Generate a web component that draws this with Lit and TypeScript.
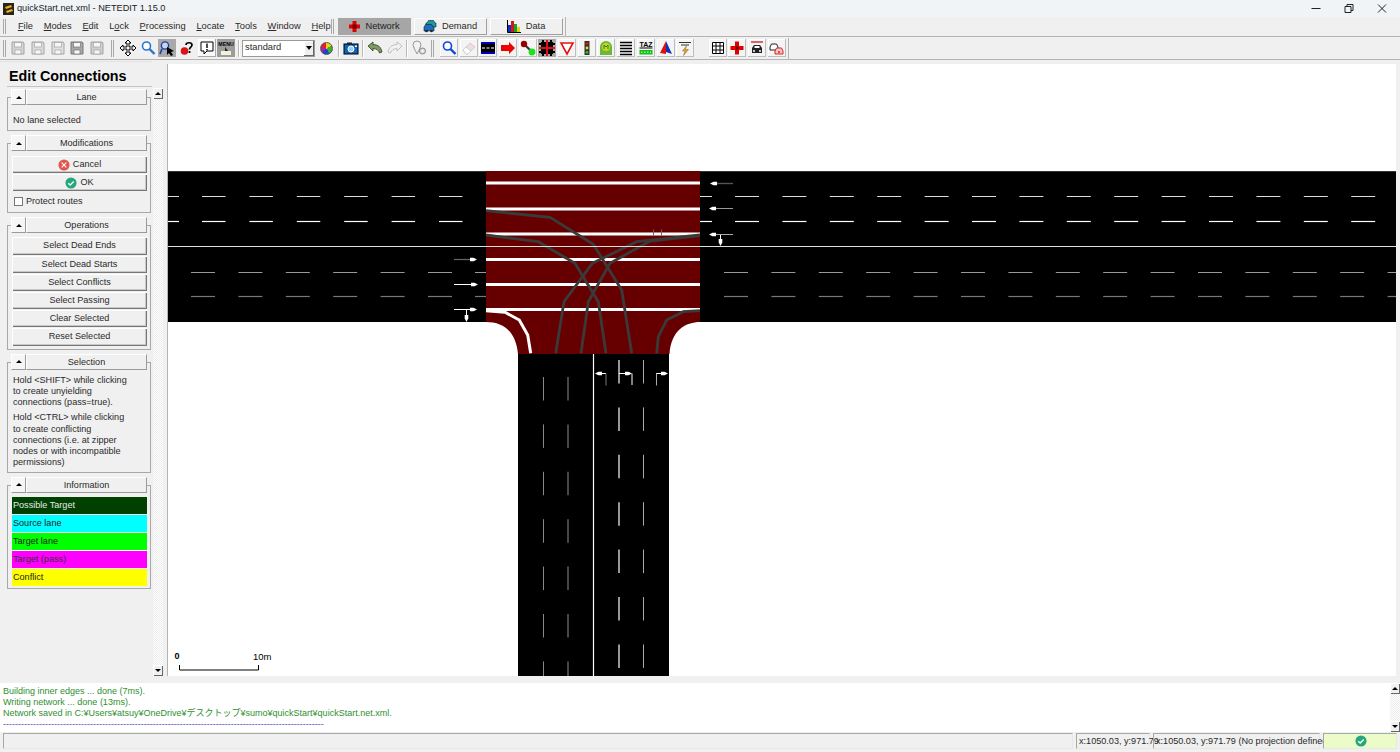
import { LitElement, html, css, svg } from "lit";
import { customElement } from "lit/decorators.js";

const zx = (x: number) => 440 + x / 3;
const zy = (y: number) => 165 + y / 3;
const pl = (pts: number[][]) => pts.map(([x, y]) => `${zx(x).toFixed(1)},${zy(y).toFixed(1)}`).join(" ");

const range = (s: number, n: number, p = 47.4) => Array.from({ length: n }, (_, i) => s + i * p);

const floppy = (c: string, f: string) => svg`<path d="M3 3h11l1 1v11H3z" fill="${f}" stroke="${c}"/><rect x="5.5" y="3.5" width="7" height="4.5" fill="#f6f6f6" stroke="${c}" stroke-width=".7"/><rect x="6" y="11" width="6" height="4" fill="#f6f6f6" stroke="${c}" stroke-width=".7"/>`;
const lens = (c: string) => svg`<circle cx="7.5" cy="7" r="4" fill="#fff" stroke="${c}" stroke-width="1.6"/><path d="M10.5 10l5 5" stroke="${c}" stroke-width="2.4"/>`;

type Item = { g?: number; grip?: boolean; sep?: boolean; combo?: boolean; wheel?: boolean; cls?: string; i?: unknown };

const items: Item[] = [
  { g: 3.2 }, { grip: true }, { g: 2.2 },
  { i: floppy("#a4a4a4", "#d4d4d4") }, { i: floppy("#a4a4a4", "#dcdcdc") }, { i: floppy("#a4a4a4", "#e0e0e0") }, { i: floppy("#777", "#a8a8a8") }, { i: floppy("#a4a4a4", "#d0d0d0") },
  { g: 4 }, { grip: true }, { g: 4.3 },
  { i: svg`<path d="M9 1l3 3h-2v4h4V6l3 3-3 3v-2h-4v4h2l-3 3-3-3h2v-4H4v2L1 9l3-3v2h4V4H6z" fill="#fff" stroke="#000"/>` },
  { i: lens("#2b74d2") },
  { cls: "on", i: svg`<circle cx="7" cy="6.5" r="3.6" fill="#c6d6ee" stroke="#1f3fa0" stroke-width="1.4"/><path d="M4 10l-2 5" stroke="#1f3fa0" stroke-width="1.6"/><path d="M9 8l7 4-3 1 2 3-2 1-2-3-2 2z" fill="#000"/>` },
  { i: svg`<circle cx="6.5" cy="12" r="3.8" fill="#d81414"/><path d="M8 6c0-3 6-3 6 0 0 2-2.6 2.2-2.6 4.6" fill="none" stroke="#000" stroke-width="1.7"/><rect x="10.6" y="12" width="1.8" height="2" fill="#000"/>` },
  { cls: "box", i: svg`<path d="M3 3h12v9h-6l-3 3v-3H3z" fill="#fff" stroke="#000"/><path d="M9 4.6v4.4M9 10v1.4" stroke="#000" stroke-width="1.4"/>` },
  { cls: "menuic", i: svg`<text x="9" y="6.5" font-size="5.2" font-weight="700" text-anchor="middle" font-family="Liberation Sans, sans-serif" fill="#000">MENU</text><path d="M4 12h10v4H4z" fill="#f5f0d8"/><path d="M8 8l3 4H8z" fill="#222"/>` },
  { g: 1.6 }, { sep: true }, { g: 2.25 },
  { combo: true }, { g: 1.15 },
  { wheel: true },
  { g: 1.8 }, { sep: true }, { g: 1.6 },
  { i: svg`<rect x="2" y="5" width="14" height="10" fill="#0c63b8" stroke="#000"/><rect x="5" y="3.5" width="5" height="2" fill="#222"/><circle cx="9" cy="10" r="3" fill="#8fd0f5" stroke="#fff"/><rect x="13" y="6.5" width="2" height="1.5" fill="#fff"/>` },
  { g: 1.6 }, { sep: true }, { g: 0.7 },
  { i: svg`<path d="M2 7l5-4v2.6c5 0 8 2.4 9 7.4l-2.4 1c-1-3-3-4.4-6.6-4.4V12z" fill="#7d9a62" stroke="#2c3a24" stroke-width=".8"/>` },
  { i: svg`<path d="M16 7l-5-4v2.6C6 5.6 3 8 2 13l2.4 1c1-3 3-4.4 6.6-4.4V12z" fill="#f2f2f2" stroke="#b9b9b9" stroke-width=".9"/>` },
  { g: 1.6 }, { sep: true }, { g: 1 },
  { i: svg`<circle cx="7" cy="6" r="4" fill="#f2f2f2" stroke="#9a9a9a"/><path d="M4 9l3 6 3-6" fill="#f2f2f2" stroke="#9a9a9a"/><circle cx="12.5" cy="12" r="3" fill="#ddd" stroke="#888"/><circle cx="12.5" cy="12" r="1" fill="#fff"/>` },
  { g: 2 }, { grip: true }, { g: 5.3 },
  { cls: "rb", i: lens("#0a45e0") },
  { cls: "rb", i: svg`<path d="M3 11l7-7 5 4-7 7H6z" fill="#f3dcdc" stroke="#cfcfcf"/><path d="M3 11l3-3 5 4-3 3H6z" fill="#fff" stroke="#cfcfcf"/>` },
  { cls: "rb", i: svg`<rect x="2" y="3" width="14" height="12" fill="#0000b8"/><rect x="2" y="5" width="14" height="8" fill="#000"/><path d="M3 9h3M7.5 9h3M12 9h3" stroke="#fff"/>` },
  { cls: "rb", i: svg`<path d="M2 6h8V3l6 6-6 6v-3H2z" fill="#ee0000"/>` },
  { cls: "rb", i: svg`<path d="M5 5l8 8" stroke="#333" stroke-width="2.2"/><circle cx="5" cy="5" r="3.2" fill="#900"/><circle cx="13" cy="13" r="3.4" fill="#1fe01f"/>` },
  { cls: "on", i: svg`<rect x="3" y="3" width="12" height="12" fill="#000"/><path d="M9 1v16M1 9h16" stroke="#e01010" stroke-width="2"/><path d="M1 5h3M14 5h3M1 13h3M14 13h3M5 1v3M13 1v3M5 14v3M13 14v3" stroke="#000" stroke-width="2"/>` },
  { cls: "rb", i: svg`<path d="M3 4h12l-6 11z" fill="#fff" stroke="#e21212" stroke-width="1.6"/>` },
  { cls: "rb", i: svg`<rect x="6.5" y="2" width="5" height="14" fill="#333"/><circle cx="9" cy="4.6" r="1.4" fill="#e81010"/><circle cx="9" cy="9" r="1.4" fill="#ece012"/><circle cx="9" cy="13.4" r="1.4" fill="#18c818"/>` },
  { cls: "rb", i: svg`<path d="M3 16V8a6 6 0 0 1 12 0v8z" fill="#6cb83a"/><circle cx="9" cy="8" r="4" fill="#c8d820"/><path d="M7 10V6l2 2 2-2v4" fill="none" stroke="#3a7a18"/>` },
  { cls: "rb", i: svg`<path d="M3 3.5h12M3 6.5h12M3 9.5h12M3 12.5h12M3 15.5h12" stroke="#000" stroke-width="1.7"/>` },
  { cls: "rb", i: svg`<text x="9" y="7.6" font-size="7" font-weight="700" text-anchor="middle" font-family="Liberation Sans, sans-serif" fill="#000">TAZ</text><path d="M2.5 9h13" stroke="#000"/><rect x="2.5" y="11" width="13" height="4.5" fill="#12c012"/><path d="M4 13.2h10" stroke="#fff" stroke-dasharray="1.5 1.5"/>` },
  { cls: "rb", i: svg`<path d="M9 2l6 13-6-2z" fill="#1030c0"/><path d="M9 2L3 14l6 1z" fill="#e01010"/>` },
  { cls: "rb", i: svg`<path d="M3 3.5h12M5 6h8" stroke="#333" stroke-width="1.1"/><path d="M10.5 7l-4 5h2.5l-1.5 4.5 5-6h-3z" fill="#e8a818" stroke="#6a4a08" stroke-width=".4"/>` },
  { g: 12.9 },
  { cls: "rb", i: svg`<path d="M3.5 3.5h11v11h-11zM7 3.5v11M11 3.5v11M3.5 7h11M3.5 11h11" fill="#fff" stroke="#000"/>` },
  { cls: "rb", i: svg`<path d="M7 2.5h4V7h4.5v4H11v4.5H7V11H2.500V7H7z" fill="#e00000"/><rect x="7.500" y="7.500" width="3" height="3" fill="#600"/>` },
  { cls: "rb", i: svg`<path d="M3 3h12" stroke="#d82020" stroke-width="1.4"/><path d="M4 9l2-3h6l2 3v5H4z" fill="#222"/><rect x="6.500" y="7" width="5" height="2" fill="#fff"/><circle cx="6" cy="12" r="1" fill="#fff"/><circle cx="12" cy="12" r="1" fill="#fff"/>` },
  { cls: "rb", i: svg`<path d="M2 8l1.500-3h5L10 8v3H2z" fill="#fff" stroke="#222"/><path d="M7 12l1.500-3h5L15 12v3H7z" fill="#f4c8c8" stroke="#d82020"/><circle cx="11" cy="13" r="1" fill="#d82020"/>` },
];

const menus = [
  ["", "F", "ile"], ["", "M", "odes"], ["", "E", "dit"], ["L", "o", "ck"], ["", "P", "rocessing"],
  ["", "L", "ocate"], ["", "T", "ools"], ["", "W", "indow"], ["", "H", "elp"],
];

const ops = ["Select Dead Ends", "Select Dead Starts", "Select Conflicts", "Select Passing", "Clear Selected", "Reset Selected"];
const legend = [
  ["Possible Target", "#004000", "#e8e8e8"], ["Source lane", "#00ffff", "#222"], ["Target lane", "#00ff00", "#222"],
  ["Target (pass)", "#ff00ff", "#333"], ["Conflict", "#ffff00", "#222"],
];

const conns = [
  [[138, 137], [330, 157], [460, 238], [545, 375], [575, 565]],
  [[138, 210], [295, 230], [405, 295], [475, 410], [498, 565]],
  [[780, 210], [590, 230], [457, 295], [372, 410], [347, 565]],
  [[780, 212], [630, 228], [510, 295], [445, 410], [423, 565]],
  [[780, 437], [730, 440], [680, 465], [655, 515], [650, 565]],
];

const hArrow = (x1: number, x2: number, y: number, shaft: string, w = 1) => {
  const d = x2 > x1 ? 1 : -1;
  return svg`<path d="M${x1} ${y}H${x2 - d * 6}" stroke="${shaft}" stroke-width="${w}"/><path d="M${x2} ${y}l${-d * 3.5} -1.800h${-d * 3.5}v3.600h${d * 3.5}z" fill="#fff"/>`;
};
const dArrow = (x: number, y1: number, y2: number) =>
  svg`<path d="M${x} ${y1}V${y2 - 6}" stroke="#fff"/><path d="M${x} ${y2}l-1.800 -3.500v-3.500h3.600v3.500z" fill="#fff"/>`;

const check = (s: number) => html`<svg class="bi" width="${s}" height="${s}" viewBox="0 0 14 14"><circle cx="7" cy="7" r="6.500" fill="#26a67c"/><path d="M3.800 7.200l2.200 2.200 4.200-4.200" fill="none" stroke="#fff" stroke-width="1.500"/></svg>`;

@customElement("app-root")
export class AppRoot extends LitElement {
  static styles = css`
    :host { display: flex; flex-direction: column; width: 1400px; height: 752px; overflow: hidden; background: #f0f0f0; font-family: "Liberation Sans", sans-serif; font-size: 9.100px; color: #2a2a2a; line-height: 11.200px; }
    .title { height: 17px; flex: none; display: flex; align-items: center; background: #f1f4f7; font-size: 9.200px; color: #222; }
    .logo { margin: 0 3px 0 3px; flex: none; }
    .ttl { flex: 1; }
    .wc { display: flex; width: 99px; flex: none; }
    .wc svg { width: 33px; height: 13px; }
    .bar { height: 20px; flex: none; display: flex; align-items: stretch; background: #f0f0f0; border-bottom: 1px solid #b4b4b4; box-sizing: border-box; font-size: 9.300px; }
    .sp3 { width: 3px; flex: none; }
    .grip { width: 3px; align-self: stretch; flex: none; margin: 2px 0; border-left: 1px solid #a8a8a8; border-right: 1px solid #a8a8a8; box-sizing: border-box; }
    .menus { display: flex; align-items: center; margin-left: 6.500px; width: 318px; flex: none; }
    .m { padding: 0 5.400px; }
    .tabs { display: flex; align-items: center; gap: 3px; margin-left: 4px; padding-right: 2px; border-right: 1px solid #b4b4b4; }
    .tab { width: 73px; height: 17px; box-sizing: border-box; display: flex; align-items: center; justify-content: center; gap: 4px; border: 1px solid #fff; border-right-color: #a0a0a0; border-bottom-color: #a0a0a0; }
    .tab.on { background: #a6a6a6; border-color: #a6a6a6; color: #222; }
    .tools { height: 23px; flex: none; display: flex; align-items: center; border-bottom: 1px solid #b4b4b4; box-sizing: border-box; }
    .toolsin { display: flex; align-items: center; height: 21px; border-right: 1px solid #b4b4b4; width: 789px; box-sizing: border-box; }
    .ib { width: 18px; height: 18px; margin: 0 .85px; flex: none; box-sizing: border-box; display: block; }
    .ib svg { width: 18px; height: 18px; display: block; }
    .ib.on { background: #a9a9a9; }
    .ib.box { background: #f8f8f8; box-shadow: inset -1px -1px 0 #a8a8a8, inset 1px 1px 0 #fff; }
    .ib.menuic { background: #9c9c9c; }
    .ib.rb { background: #f4f4f4; box-shadow: inset -1px -1px 0 #bdbdbd, inset 1px 1px 0 #fff; }
    .sep { width: 2px; height: 17px; flex: none; border-left: 1px solid #b8b8b8; border-right: 1px solid #fff; box-sizing: border-box; }
    .combo { width: 73px; height: 17px; flex: none; box-sizing: border-box; background: #fff; border: 1px solid #9a9a9a; display: flex; align-items: center; justify-content: space-between; padding-left: 2px; font-size: 9.300px; }
    .cbtn { width: 10px; height: 15px; background: #eee; box-shadow: inset -1px -1px 0 #666, inset 1px 1px 0 #fff; display: flex; align-items: center; justify-content: center; }
    .cbtn i { border: 3px solid transparent; border-top: 4px solid #000; border-bottom: 0; }
    .wheel { width: 13px; height: 13px; margin: 0 3.300px; border-radius: 50%; flex: none; border: .5px solid #555; box-sizing: border-box; background: conic-gradient(#f0d010 0 60deg, #3cb030 60deg 150deg, #2040d0 150deg 230deg, #b020a0 230deg 290deg, #e82020 290deg 360deg); }
    .main { flex: 1; min-height: 0; display: flex; padding-top: 4px; }
    .side { width: 152px; flex: none; display: flex; flex-direction: column; border-top: 1px solid #e2e2e2; margin-top: -3px; }
    .h1 { font: 700 14.300px/22px "Liberation Sans", sans-serif; color: #000; height: 21px; padding: 3px 0 0 2px; border-bottom: 1px solid #c4c4c4; margin-left: 7px; }
    .groups { padding-top: 10px; display: flex; flex-direction: column; gap: 12px; }
    .group { margin-left: 7px; width: 144px; box-sizing: border-box; border: 1px solid #a8a8a8; padding: 0 3px 0 4px; }
    .gh { display: flex; height: 16px; margin: -9px 0 0 -1px; background: #f0f0f0; }
    .tri { width: 15px; box-sizing: border-box; background: #f6f6f6; border: 1px solid #fff; border-right-color: #9a9a9a; border-bottom-color: #9a9a9a; display: flex; align-items: center; justify-content: center; }
    .tri i, .sb i.up { border: 3px solid transparent; border-bottom: 3.500px solid #000; border-top: 0; display: block; }
    .gt { flex: 1; box-sizing: border-box; border: 1px solid #fff; border-right-color: #9a9a9a; border-bottom-color: #9a9a9a; text-align: center; line-height: 15px; }
    .plain { margin: 9px 0 4px -1px; line-height: 12px; padding-left: 2px; }
    .btns { display: flex; flex-direction: column; gap: 1px; }
    .btn { width: 135px; height: 17.200px; box-sizing: border-box; display: flex; align-items: center; justify-content: center; gap: 3px; background: #f0f0f0; box-shadow: inset 1px 1px 0 #fff, inset -1px -1px 0 #777, inset -2px -2px 0 #c8c8c8; }
    .bi { display: block; flex: none; }
    .m5 { margin-top: 5px; }
    .m4 { margin-top: 4px; padding-bottom: 3px; }
    .m4b { margin-top: 4px; padding-bottom: 2px; }
    .chk { display: flex; align-items: center; gap: 3px; margin: 5px 0 6px 2px; height: 10px; }
    .cb { width: 9px; height: 9px; box-sizing: border-box; background: #fff; border: 1px solid #777; }
    .p { padding-left: 1px; margin-top: 5px; margin-bottom: 3.100px; }
    .p + .p { margin-top: 4.300px; }
    .lg { height: 17.200px; padding-left: 1px; line-height: 17.500px; width: 135px; box-sizing: border-box; }
    .sb { width: 10px; flex: none; margin-left: 1px; display: flex; flex-direction: column; }
    .sb .a { height: 11px; flex: none; box-sizing: border-box; background: #f0f0f0; box-shadow: inset 1px 1px 0 #fff, inset -1px -1px 0 #666; display: flex; align-items: center; justify-content: center; }
    .sb .t { flex: 1; background: repeating-conic-gradient(#fff 0 25%, #ececec 0 50%) 0 0 / 2px 2px; }
    i.dn { border: 3px solid transparent; border-top: 3.500px solid #000; border-bottom: 0; display: block; }
    .side-sb { margin-top: 24px; }
    .cv { margin-left: 4px; width: 1229px; flex: none; border-left: 1px solid #b4b4b4; box-sizing: border-box; background: #fff; }
    .cv svg { display: block; }
    .log { height: 49px; flex: none; margin-top: 7px; display: flex; background: #fff; }
    .lines { flex: 1; padding: 3px 0 0 3px; color: #2f8f2f; font-size: 9px; line-height: 11.100px; font-family: "Liberation Sans", "Noto Sans CJK JP", sans-serif; }
    .dash { color: #4a4ac8; white-space: nowrap; }
    .status { height: 20px; flex: none; display: flex; gap: 3px; padding: 1px 3px 3px; box-sizing: border-box; }
    .sc { box-sizing: border-box; border: 1px solid #a8a8a8; border-right-color: #e8e8e8; border-bottom-color: #e8e8e8; white-space: nowrap; padding-left: 2px; line-height: 15px; height: 16px; }
    .s0 { width: 1070px; }
    .s1 { width: 74px; }
    .s2 { width: 167px; }
    .s3 { width: 74px; background: #ebfcc9; display: flex; align-items: center; justify-content: center; }
  `;

  render() {
    return html`
      <div class="title">
        <svg class="logo" width="11" height="12" viewBox="0 0 11 12"><rect width="11" height="12" fill="#2a2418"/><path d="M2 4l6-2 1 2-6 2zM3 8l6-2 1 2-6 2z" fill="#e8b020"/></svg>
        <div class="ttl">quickStart.net.xml - NETEDIT 1.15.0</div>
        <div class="wc">
          <svg viewBox="0 0 33 13"><path d="M10.500 6.500h9" stroke="#222"/></svg>
          <svg viewBox="0 0 33 13"><path d="M11 4.500h6v6h-6zM13 4.500v-2h6v6h-2" fill="none" stroke="#222"/></svg>
          <svg viewBox="0 0 33 13"><path d="M11 2.500l8 8M19 2.500l-8 8" stroke="#222"/></svg>
        </div>
      </div>
      <div class="bar">
        <div class="sp3"></div><div class="grip"></div>
        <div class="menus">${menus.map(([a, b, c]) => html`<span class="m">${a}<u>${b}</u>${c}</span>`)}</div>
        <div class="grip"></div>
        <div class="tabs">
          <div class="tab on"><svg width="13" height="13" viewBox="0 0 13 13"><path d="M4.500 1h4v3.500H12v4H8.500V12h-4V8.500H1v-4h3.500z" fill="#e00000"/><rect x="4.500" y="4.500" width="4" height="4" fill="#700"/></svg>Network</div>
          <div class="tab"><svg width="15" height="13" viewBox="0 0 15 13"><path d="M4 3l1.500-2.500h5L12 3h1v4H3V3z" fill="#1a9a9a" stroke="#123"  stroke-width=".6"/><path d="M1 7l1.500-2.500h6L10 7h1v4H1z" fill="#1c6fc0" stroke="#123" stroke-width=".6"/><circle cx="3.500" cy="11" r="1.300" fill="#222"/><circle cx="8.500" cy="11" r="1.300" fill="#222"/></svg>Demand</div>
          <div class="tab"><svg width="15" height="13" viewBox="0 0 15 13"><rect x="1" y="5" width="3" height="7" fill="#1030c0"/><rect x="4" y="1" width="3" height="11" fill="#d01818"/><rect x="7" y="4" width="3" height="8" fill="#18a030"/><rect x="10" y="7" width="3" height="5" fill="#e8d010"/><path d="M.500 0v12.500H14" fill="none" stroke="#000"/></svg>Data</div>
        </div>
      </div>
      <div class="tools"><div class="toolsin">
        ${items.map((it) => {
          if (it.g !== undefined) return html`<div style="width:${it.g}px;flex:none"></div>`;
          if (it.grip) return html`<div class="grip"></div>`;
          if (it.sep) return html`<div class="sep"></div>`;
          if (it.combo) return html`<div class="combo">standard<span class="cbtn"><i></i></span></div>`;
          if (it.wheel) return html`<span class="wheel"></span>`;
          return html`<span class="ib ${it.cls ?? ""}"><svg viewBox="0 0 18 18">${it.i}</svg></span>`;
        })}
      </div></div>
      <div class="main">
        <div class="side">
          <div class="h1">Edit Connections</div>
          <div class="groups">
            <section class="group">
              ${this.gh("Lane")}
              <div class="plain">No lane selected</div>
            </section>
            <section class="group">
              ${this.gh("Modifications")}
              <div class="btns m5">
                <div class="btn"><svg class="bi" width="12" height="12" viewBox="0 0 14 14"><circle cx="7" cy="7" r="6.500" fill="#e2564c"/><path d="M4.300 4.300l5.400 5.400M9.700 4.300l-5.400 5.400" stroke="#fff" stroke-width="1.300"/></svg>Cancel</div>
                <div class="btn">${check(12)}OK</div>
              </div>
              <div class="chk"><span class="cb"></span>Protect routes</div>
            </section>
            <section class="group">
              ${this.gh("Operations")}
              <div class="btns m4">${ops.map((o) => html`<div class="btn">${o}</div>`)}</div>
            </section>
            <section class="group">
              ${this.gh("Selection")}
              <div class="p">Hold &lt;SHIFT&gt; while clicking<br />to create unyielding<br />connections (pass=true).</div>
              <div class="p">Hold &lt;CTRL&gt; while clicking<br />to create conflicting<br />connections (i.e. at zipper<br />nodes or with incompatible<br />permissions)</div>
            </section>
            <section class="group">
              ${this.gh("Information")}
              <div class="btns m4b">
                ${legend.map(([t, bg, c]) => html`<div class="lg" style="background:${bg};color:${c}">${t}</div>`)}
              </div>
            </section>
          </div>
        </div>
        <div class="sb side-sb">
          <div class="a"><i class="up"></i></div><div class="t"></div><div class="a"><i class="dn"></i></div>
        </div>
        <div class="cv">${this.road()}</div>
      </div>
      <div class="log">
        <div class="lines">
          <div>Building inner edges ... done (7ms).</div>
          <div>Writing network ... done (13ms).</div>
          <div>Network saved in C:¥Users¥atsuy¥OneDrive¥デスクトップ¥sumo¥quickStart¥quickStart.net.xml.</div>
          <div class="dash">${"-".repeat(107)}</div>
        </div>
        <div class="sb">
          <div class="a"><i class="up"></i></div><div class="t"></div><div class="a"><i class="dn"></i></div>
        </div>
      </div>
      <div class="status">
        <div class="sc s0"></div>
        <div class="sc s1">x:1050.03, y:971.79</div>
        <div class="sc s2">x:1050.03, y:971.79 (No projection defined)</div>
        <div class="sc s3">${check(12)}</div>
      </div>
    `;
  }

  gh(t: string) {
    return html`<div class="gh"><div class="tri"><i></i></div><div class="gt">${t}</div></div>`;
  }

  road() {
    const w = "#fff";
    return html`<svg width="1228" height="612" viewBox="168 64 1228 612" font-family="Liberation Sans, sans-serif">
      <rect x="168" y="171" width="1228" height="151" fill="#000"/>
      <rect x="168" y="171" width="1228" height="1" fill="#333"/>
      <rect x="518" y="354" width="151" height="322" fill="#000"/>
      <path d="M486 171H700V322C686 322 671 330 669.500 354H518C516 332 504 322 486 322Z" fill="#660000"/>
      ${[183, 209, 234, 259.500, 284.500, 309.500].map((y) => svg`<rect x="486" y="${y - 1.500}" width="214" height="3" fill="#fff"/>`)}
      ${conns.map((c) => svg`<polyline points="${pl(c)}" fill="none" stroke="#3a3a3a" stroke-width="2.800"/>`)}
      <path d="M653.500 235.500v-6M661.500 235.500v-6" stroke="#666" stroke-width="1"/>
      <polyline points="${pl([[138, 437], [195, 442], [238, 465], [263, 510], [272, 565]])}" fill="none" stroke="#fff" stroke-width="3"/>
      <path d="M168 246.500H1396" stroke="#ddd" stroke-width="1"/>
      <path d="M593.500 354V676" stroke="#fff" stroke-width="1.200"/>
      ${[[168, 179], ...range(202, 6).map((x) => [x, x + 23.500])].flatMap(([a, b]) => [
        svg`<path d="M${a} 196.500H${b}" stroke="#ddd"/>`,
        svg`<path d="M${a} 221.500H${b}" stroke="${w}" stroke-width="1.200"/>`,
      ])}
      ${[...range(191, 6), 475].flatMap((a) => {
        const b = Math.min(a + 24, 486);
        return [svg`<path d="M${a} 272.500H${b}" stroke="#999"/>`, svg`<path d="M${a} 296.500H${b}" stroke="#777" stroke-width="1.200"/>`];
      })}
      ${[[700, 712], ...range(735, 14).map((x) => [x, x + 24])].flatMap(([a, b]) => [
        svg`<path d="M${a} 196.500H${b}" stroke="#ddd"/>`,
        svg`<path d="M${a} 221.500H${b}" stroke="${w}" stroke-width="1.200"/>`,
      ])}
      ${range(724, 15).flatMap((a) => {
        const b = Math.min(a + 24, 1396);
        return [svg`<path d="M${a} 272.500H${b}" stroke="#999"/>`, svg`<path d="M${a} 296.500H${b}" stroke="#777" stroke-width="1.200"/>`];
      })}
      ${range(377, 7).flatMap((y) => {
        const e = Math.min(y + 23.500, 676);
        return [svg`<path d="M543.500 ${y}V${e}" stroke="#888"/>`, svg`<path d="M568 ${y}V${e}" stroke="#777" stroke-width="1.200"/>`];
      })}
      ${range(360, 7).flatMap((y) => [
        svg`<path d="M619 ${y}V${y + 23.500}" stroke="#fff" stroke-width="1.200"/>`,
        svg`<path d="M643.500 ${y}V${y + 23.500}" stroke="#aaa"/>`,
      ])}
      ${hArrow(454, 477, 259.500, "#666", 1.200)}
      ${hArrow(454, 478, 284.500, "#fff")}
      ${hArrow(454, 477, 309.500, "#fff")}
      ${dArrow(466.500, 310, 322)}
      ${hArrow(733, 710, 183.500, "#555", 1.400)}
      ${hArrow(733, 709, 208.500, "#999")}
      ${hArrow(733, 709, 234.500, "#aaa")}
      ${dArrow(720.500, 235, 246)}
      ${hArrow(606, 595, 373.500, "#fff")}
      <path d="M606 373.500V385.500" stroke="#777"/>
      ${hArrow(619, 632, 373.500, "#fff")}
      <path d="M632 373.500V385" stroke="#fff"/>
      ${hArrow(656, 668, 373.500, "#fff")}
      <path d="M656.500 373.500V385.500" stroke="#aaa"/>
      <text x="174.500" y="659" font-size="9" font-weight="700" fill="#000">0</text>
      <text x="253" y="660" font-size="9.500" fill="#000">10m</text>
      <path d="M179.500 665V670H258.500V665" fill="none" stroke="#000"/>
    </svg>`;
  }
}
